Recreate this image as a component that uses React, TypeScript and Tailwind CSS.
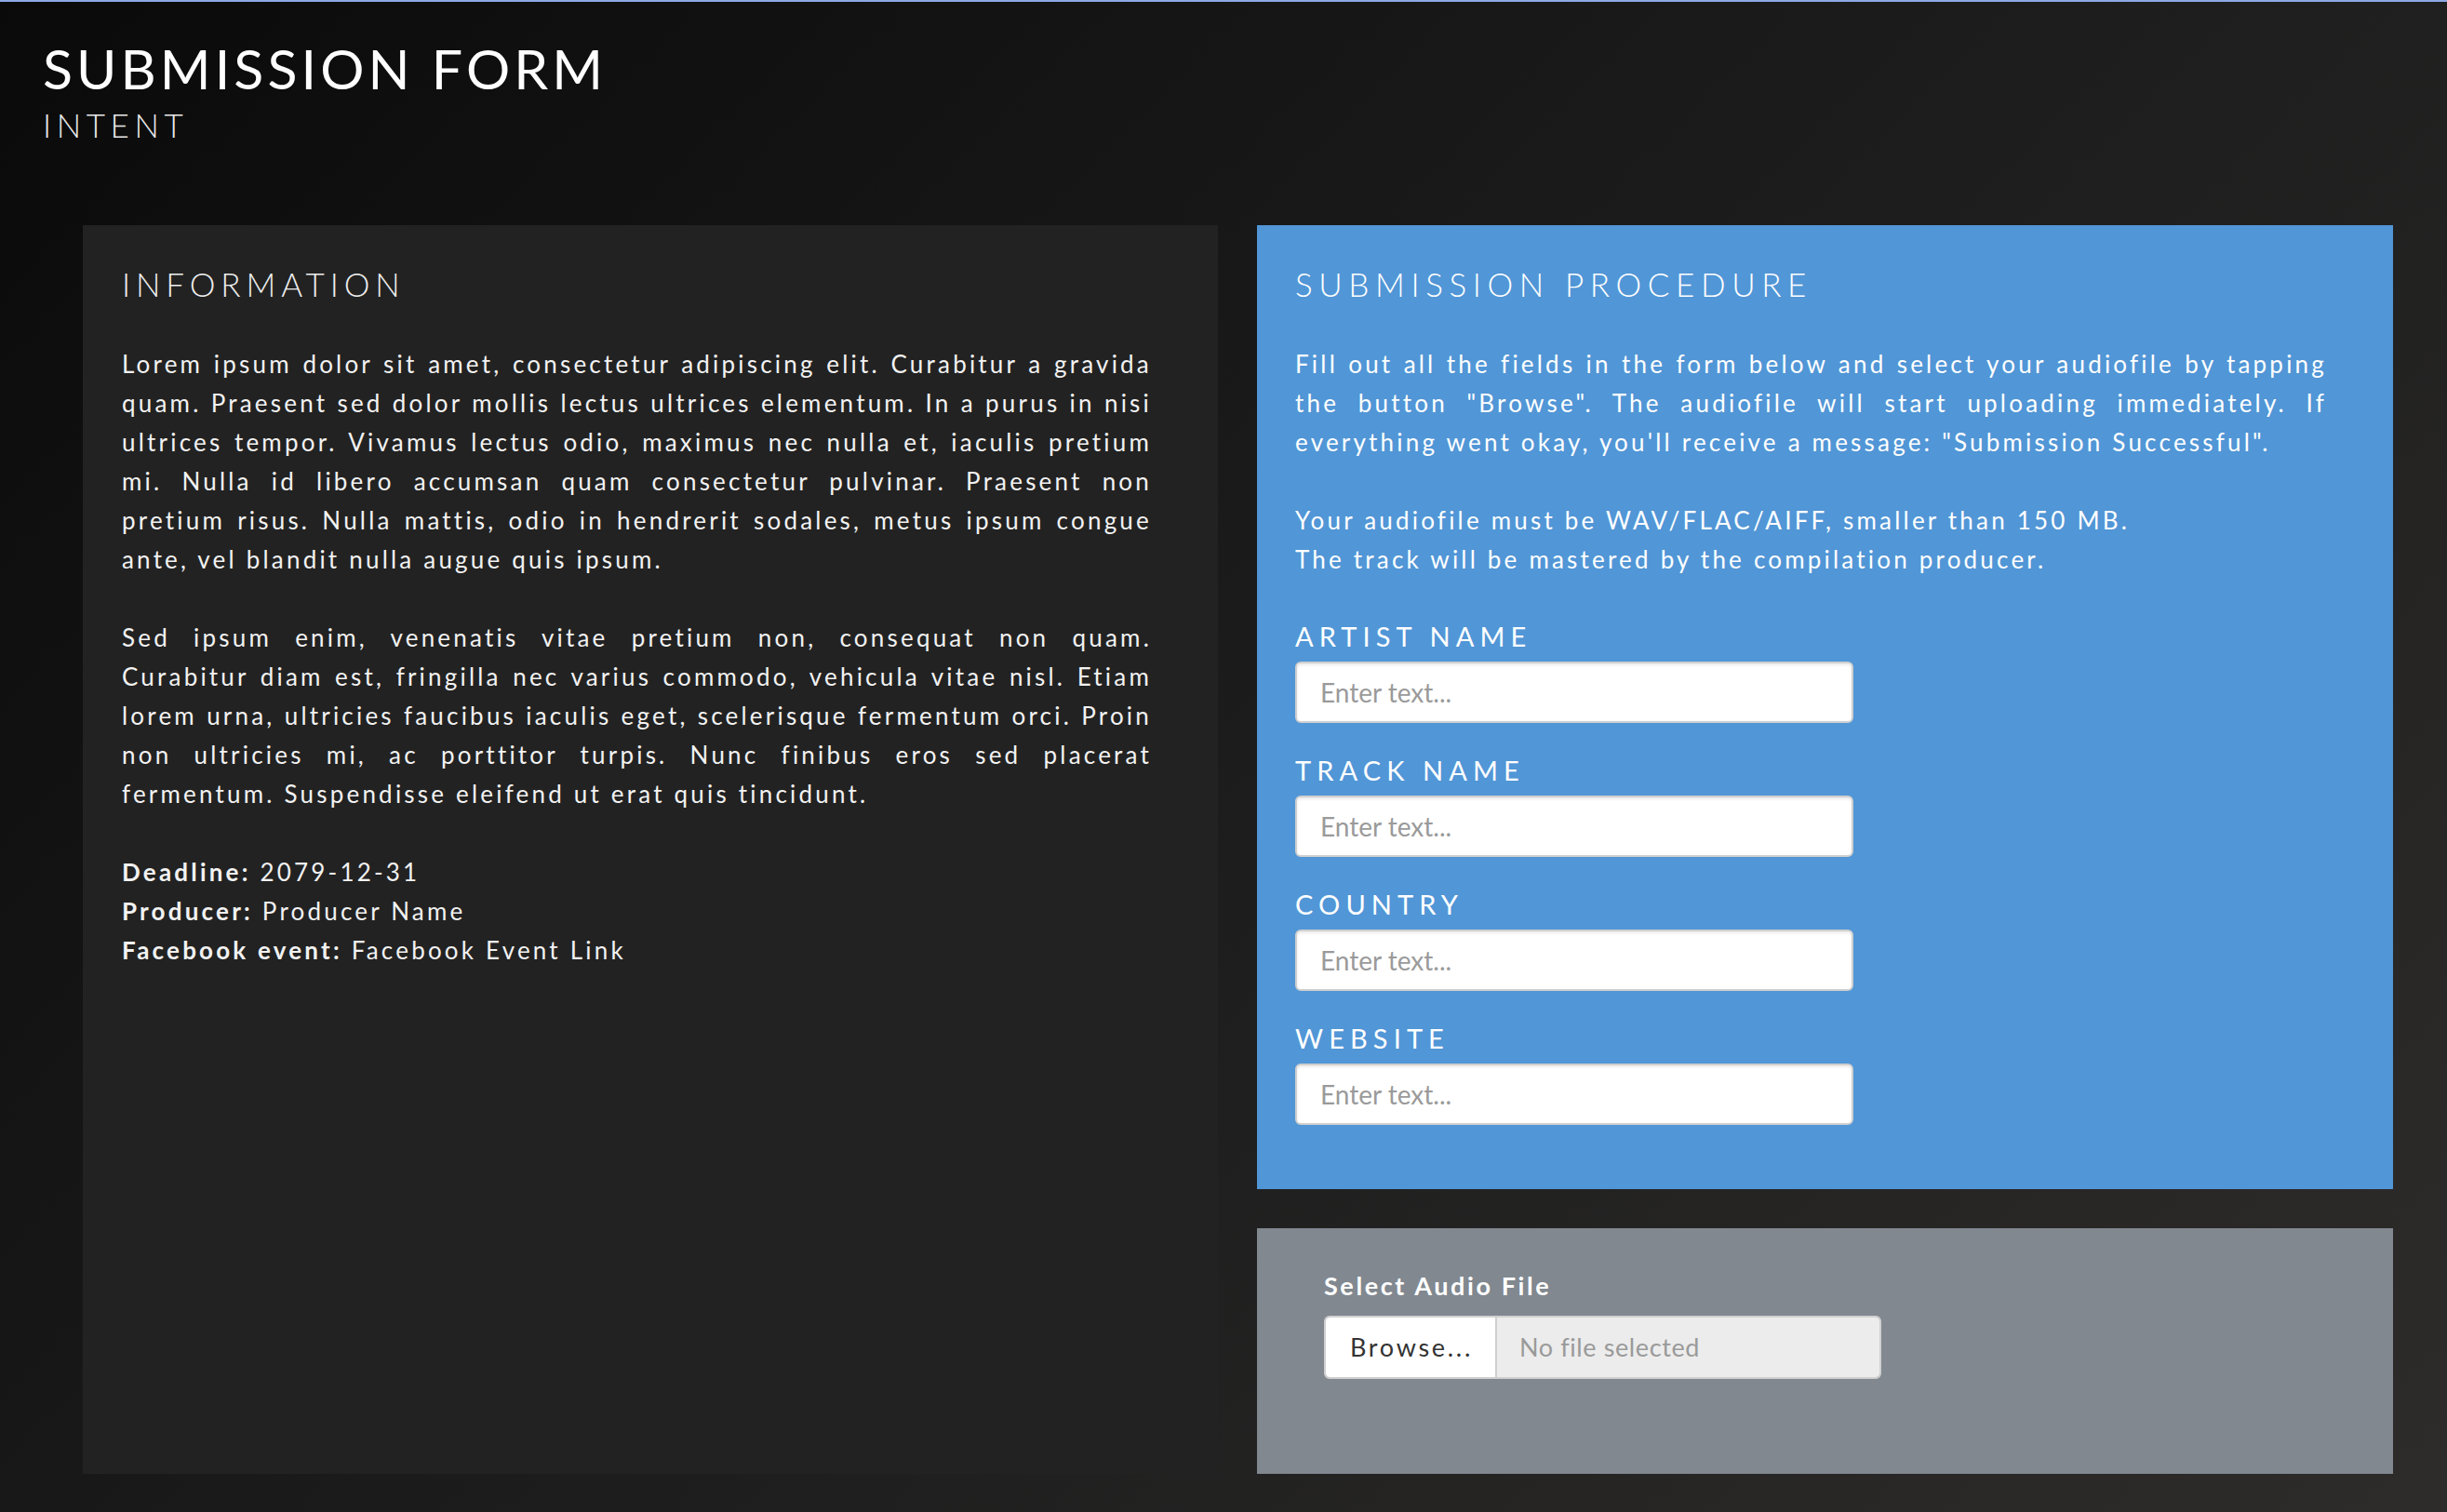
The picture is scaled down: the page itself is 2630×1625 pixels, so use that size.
import React from "react";

const FONT = { fontFamily: "Lato, 'Noto Sans', sans-serif" };

function JPara({ lines, className = "" }: { lines: string[]; className?: string }) {
  return (
    <div className={className}>
      {lines.map((l, i) => (
        <span
          key={i}
          className={
            i < lines.length - 1
              ? "block text-justify [text-align-last:justify]"
              : "block text-left"
          }
        >
          {l}
        </span>
      ))}
    </div>
  );
}

function Field({ label, first }: { label: string; first?: boolean }) {
  return (
    <div className={first ? "mt-[44px]" : "mt-[33px]"}>
      <div className="text-[29px] leading-[36px] tracking-[6.1px] text-white font-normal">
        {label}
      </div>
      <input
        type="text"
        placeholder="Enter text..."
        className="mt-[9px] block h-[66px] w-[600px] rounded-[6px] border-2 border-[#cfcfcf] bg-white px-[25px] text-[28px] text-[#333] placeholder:text-[#9a9a9a] shadow-[inset_0_2px_3px_rgba(0,0,0,0.08)] outline-none"
        style={FONT}
      />
    </div>
  );
}

export default function App() {
  const p1 = [
    "Lorem ipsum dolor sit amet, consectetur adipiscing elit. Curabitur a gravida",
    "quam. Praesent sed dolor mollis lectus ultrices elementum. In a purus in nisi",
    "ultrices tempor. Vivamus lectus odio, maximus nec nulla et, iaculis pretium",
    "mi. Nulla id libero accumsan quam consectetur pulvinar. Praesent non",
    "pretium risus. Nulla mattis, odio in hendrerit sodales, metus ipsum congue",
    "ante, vel blandit nulla augue quis ipsum.",
  ];
  const p2 = [
    "Sed ipsum enim, venenatis vitae pretium non, consequat non quam.",
    "Curabitur diam est, fringilla nec varius commodo, vehicula vitae nisl. Etiam",
    "lorem urna, ultricies faucibus iaculis eget, scelerisque fermentum orci. Proin",
    "non ultricies mi, ac porttitor turpis. Nunc finibus eros sed placerat",
    "fermentum. Suspendisse eleifend ut erat quis tincidunt.",
  ];
  const r1 = [
    "Fill out all the fields in the form below and select your audiofile by tapping",
    "the button \"Browse\". The audiofile will start uploading immediately. If",
    "everything went okay, you'll receive a message: \"Submission Successful\".",
  ];

  return (
    <div
      className="flex h-screen w-full flex-col border-t-[2px] border-[#8ea8e6] bg-[linear-gradient(135deg,#0a0a0a_0%,#1c1c1c_50%,#2e2c2b_100%)] text-white"
      style={FONT}
    >
      <header className="pl-[46px] pt-[37px]">
        <h1 className="text-[59px] leading-[70px] tracking-[4.1px] font-normal text-white">
          SUBMISSION FORM
        </h1>
        <div className="mt-[4px] text-[35px] leading-[42px] tracking-[0.16em] font-light text-[#e8e8e8]">
          INTENT
        </div>
      </header>

      <main className="mt-[87px] flex min-h-0 flex-1 gap-[42px] pl-[89px] pr-[58px] pb-[41px]">
        <section className="w-[1220px] bg-[#222222] pl-[42px] pr-[71px] pt-[42px]">
          <h2 className="text-[35px] leading-[42px] tracking-[5.9px] font-light text-[#eeeeee]">
            INFORMATION
          </h2>
          <div className="mt-[44px] text-[26px] leading-[42px] tracking-[3.2px] text-[#f2f2f2]">
            <JPara lines={p1} />
            <JPara lines={p2} className="mt-[42px]" />
            <div className="mt-[42px]">
              <div>
                <span className="font-bold">Deadline:</span> 2079-12-31
              </div>
              <div>
                <span className="font-bold">Producer:</span> Producer Name
              </div>
              <div>
                <span className="font-bold">Facebook event:</span> Facebook Event Link
              </div>
            </div>
          </div>
        </section>

        <div className="flex w-[1221px] flex-col gap-[42px]">
          <section className="flex-1 bg-[#5196d6] pl-[41px] pr-[71px] pt-[42px]">
            <h2 className="text-[35px] leading-[42px] tracking-[6.6px] font-light text-white">
              SUBMISSION PROCEDURE
            </h2>
            <div className="mt-[44px] text-[26px] leading-[42px] tracking-[3.2px] text-white">
              <JPara lines={r1} />
              <div className="mt-[42px]">
                <div>Your audiofile must be WAV/FLAC/AIFF, smaller than 150 MB.</div>
                <div>The track will be mastered by the compilation producer.</div>
              </div>
            </div>
            <Field label="ARTIST NAME" first />
            <Field label="TRACK NAME" />
            <Field label="COUNTRY" />
            <Field label="WEBSITE" />
          </section>

          <section className="h-[264px] shrink-0 bg-[#818890] pl-[72px] pt-[44px]">
            <div className="text-[27px] leading-[36px] tracking-[2.6px] font-bold text-white">
              Select Audio File
            </div>
            <div className="mt-[14px] flex h-[68px] w-[599px] overflow-hidden rounded-[6px] border-2 border-[#d0d0d0]">
              <div className="flex w-[182px] items-center bg-white pl-[26px] text-[27px] tracking-[2.7px] text-[#333]">
                Browse...
              </div>
              <div className="flex flex-1 items-center border-l-2 border-[#cfcfcf] bg-[#ececec] pl-[24px] text-[27px] tracking-[0.6px] text-[#9a9a9a]">
                No file selected
              </div>
            </div>
          </section>
        </div>
      </main>
    </div>
  );
}
